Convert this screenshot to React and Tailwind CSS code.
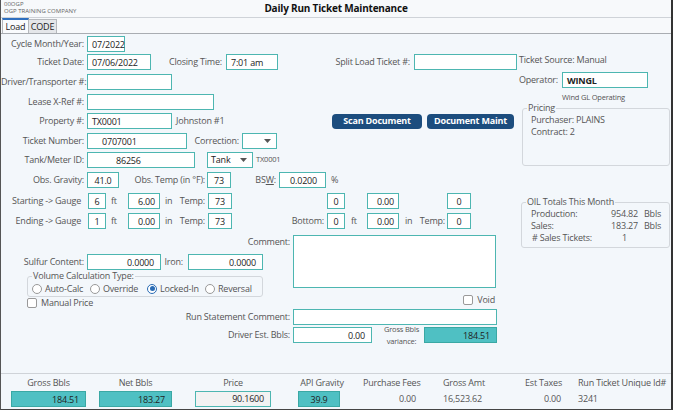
import React from "react";

const L = "shrink-0 whitespace-nowrap text-right text-[#555]";

function Inp({ className = "", align = "left", teal = false, children }) {
	return (
		<div
			className={`flex h-[16px] shrink-0 items-center border px-[4px] leading-none text-[#222] ${
				teal ? "border-[#3aa8a4] bg-[#4fc0c3]" : "border-[#4db6b1] bg-white"
			} ${align === "right" ? "justify-end" : align === "center" ? "justify-center" : "justify-start"} ${className}`}
		>
			{children}
		</div>
	);
}

function Select({ className = "", children }) {
	return (
		<div className={`flex h-[16px] shrink-0 items-center justify-between border border-[#4db6b1] bg-white pl-[3px] pr-[5px] text-[#222] ${className}`}>
			<span>{children}</span>
			<svg width="7" height="4" viewBox="0 0 7 4">
				<path d="M0 0h7L3.5 4z" fill="#555" />
			</svg>
		</div>
	);
}

function Radio({ checked, label, className = "" }) {
	return (
		<div className={`flex shrink-0 items-center gap-[3px] text-[#555] ${className}`}>
			<span
				className={`flex h-[10px] w-[10px] items-center justify-center rounded-full border bg-white ${
					checked ? "border-[#2a6cb5]" : "border-[#999]"
				}`}
			>
				{checked && <span className="h-[5px] w-[5px] rounded-full bg-[#2a6cb5]" />}
			</span>
			{label}
		</div>
	);
}

function Check({ label, className = "" }) {
	return (
		<div className={`flex items-center gap-[4px] text-[#555] ${className}`}>
			<span className="h-[10px] w-[10px] rounded-[2px] border border-[#999] bg-white" />
			{label}
		</div>
	);
}

function Gauge({ label, ft, inch, temp, bft, bin, btemp, showBottom }) {
	return (
		<div className="flex h-[16px] items-center">
			<div className={`${L} w-[87px] pr-[7px]`}>{label}</div>
			<Inp className="w-[18px]" align="center">{ft}</Inp>
			<div className="w-[22px] shrink-0 pl-[5px] text-[#555]">ft</div>
			<Inp className="w-[32px]" align="right">{inch}</Inp>
			<div className="flex w-[48px] shrink-0 justify-between pl-[5px] pr-[3px] text-[#555]">
				<span>in</span>
				<span>Temp:</span>
			</div>
			<Inp className="w-[24px]" align="center">{temp}</Inp>
			<div className={`${L} w-[95px] pr-[3px]`}>{showBottom ? "Bottom:" : ""}</div>
			<Inp className="w-[18px]" align="center">{bft}</Inp>
			<div className="w-[22px] shrink-0 pl-[6px] text-[#555]">{showBottom ? "ft" : ""}</div>
			<Inp className="w-[32px]" align="right">{bin}</Inp>
			<div className="flex w-[48px] shrink-0 justify-between pl-[6px] pr-[2px] text-[#555]">
				<span>{showBottom ? "in" : ""}</span>
				<span>{showBottom ? "Temp:" : ""}</span>
			</div>
			<Inp className="w-[24px]" align="center">{btemp}</Inp>
		</div>
	);
}

export default function App() {
	return (
		<div className="flex h-[410px] w-[673px] flex-col overflow-hidden border-b border-l border-r-2 border-b-[#444] border-l-[#555] border-r-[#333] bg-[#f3f7fb] font-['Open_Sans',sans-serif] text-[9px] tracking-[-0.2px]">
			{/* header */}
			<div className="grid h-[18px] shrink-0 grid-cols-[1fr_auto_1fr] items-center border-b border-[#cfd3d8] bg-[#f7f9fb]">
				<div className="self-start pl-[3px] pt-[1px] text-[6px] leading-[7px] tracking-normal text-[#666]">
					<div>00OGP</div>
					<div>OGP TRAINING COMPANY</div>
				</div>
				<div className="text-[10px] font-bold text-[#111]">Daily Run Ticket Maintenance</div>
				<div />
			</div>

			{/* tabs */}
			<div className="flex h-[16px] shrink-0 items-end border-b border-[#a9adb2] bg-[#f7f9fb] pl-[1px]">
				<div className="flex h-[15px] w-[27px] items-center justify-center border border-b-0 border-t-2 border-[#b5b8bc] border-t-[#2f6fbf] bg-[#f9fbfd] text-[#222]">
					Load
				</div>
				<div className="flex h-[14px] w-[28px] items-center justify-center border border-b-0 border-l-0 border-[#b5b8bc] bg-[#e4e6e9] text-[#222]">
					CODE
				</div>
			</div>

			{/* main */}
			<div className="flex h-[339px] shrink-0">
				<div className="flex w-[517px] shrink-0 flex-col pt-[2px]">
					<div className="flex h-[16px] items-center">
						<div className={`${L} w-[86px] pr-[3px]`}>Cycle Month/Year:</div>
						<Inp className="w-[38px]">07/2022</Inp>
					</div>

					<div className="mt-[2px] flex h-[16px] items-center">
						<div className={`${L} w-[86px] pr-[3px]`}>Ticket Date:</div>
						<Inp className="w-[64px]">07/06/2022</Inp>
						<div className={`${L} w-[73px] pr-[2px]`}>Closing Time:</div>
						<Inp className="ml-[2px] w-[52px]">7:01 am</Inp>
						<div className={`${L} w-[136px] pr-[4px]`}>Split Load Ticket #:</div>
						<Inp className="w-[103px]" />
					</div>

					<div className="mt-[4px] flex h-[16px] items-center">
						<div className={`${L} w-[86px] pr-[3px]`}>Driver/Transporter #:</div>
						<Inp className="w-[85px]" />
					</div>

					<div className="mt-[4px] flex h-[16px] items-center">
						<div className={`${L} w-[86px] pr-[3px]`}>Lease X-Ref #:</div>
						<Inp className="w-[127px]" />
					</div>

					<div className="mt-[3px] flex h-[16px] items-center">
						<div className={`${L} w-[86px] pr-[3px]`}>Property #:</div>
						<Inp className="w-[85px]">TX0001</Inp>
						<span className="ml-[4px] text-[#555]">Johnston #1</span>
						<div className="ml-auto mr-[4px] flex gap-[5px]">
							<button className="h-[15px] w-[90px] rounded-[4px] bg-[#1c4d7e] text-[9px] font-bold text-white">Scan Document</button>
							<button className="h-[15px] w-[87px] rounded-[4px] bg-[#1c4d7e] text-[9px] font-bold text-white">Document Maint</button>
						</div>
					</div>

					<div className="mt-[4px] flex h-[16px] items-center">
						<div className={`${L} w-[86px] pr-[3px]`}>Ticket Number:</div>
						<Inp className="w-[100px] pl-[14px]">0707001</Inp>
						<div className={`${L} w-[55px] pr-[3px]`}>Correction:</div>
						<Select className="w-[35px]" />
					</div>

					<div className="mt-[3px] flex h-[16px] items-center">
						<div className={`${L} w-[86px] pr-[3px]`}>Tank/Meter ID:</div>
						<Inp className="w-[108px] pl-[28px]">86256</Inp>
						<Select className="ml-[12px] w-[46px]">Tank</Select>
						<span className="ml-[3px] text-[7.5px] text-[#555]">TX0001</span>
					</div>

					<div className="mt-[4px] flex h-[16px] items-center">
						<div className={`${L} w-[86px] pr-[3px]`}>Obs. Gravity:</div>
						<Inp className="w-[32px]" align="center">41.0</Inp>
						<div className={`${L} w-[88px] pr-[2px]`}>Obs. Temp (in °F):</div>
						<Inp className="w-[24px]" align="center">73</Inp>
						<div className={`${L} w-[48px] pr-[3px]`}>
							BS<u>W</u>:
						</div>
						<Inp className="w-[47px] pr-[8px]" align="right">0.0200</Inp>
						<span className="ml-[5px] text-[#555]">%</span>
					</div>

					<div className="mt-[5px]">
						<Gauge label="Starting -> Gauge" ft="6" inch="6.00" temp="73" bft="0" bin="0.00" btemp="0" />
					</div>
					<div className="mt-[4px]">
						<Gauge label="Ending -> Gauge" ft="1" inch="0.00" temp="73" bft="0" bin="0.00" btemp="0" showBottom />
					</div>

					<div className="mt-[6px] flex">
						<div className="w-[248px] shrink-0">
							<div className="mt-[19px] flex h-[16px] items-center">
								<div className={`${L} w-[86px] pr-[3px]`}>Sulfur Content:</div>
								<Inp className="w-[74px] pr-[6px]" align="right">0.0000</Inp>
								<div className={`${L} w-[27px] pr-[5px]`}>Iron:</div>
								<Inp className="w-[75px] pr-[6px]" align="right">0.0000</Inp>
							</div>
							<fieldset className="ml-[26px] mt-[1px] h-[26px] w-[236px] shrink-0 rounded-[3px] border border-[#d3d7dc]">
								<legend className="ml-[4px] px-[1px] leading-[10px] text-[#555]">Volume Calculation Type:</legend>
								<div className="mt-[1px] flex h-[13px] items-center pl-[4px]">
									<Radio label="Auto-Calc" className="w-[58px]" />
									<Radio label="Override" className="w-[57px]" />
									<Radio label="Locked-In" checked className="w-[58px]" />
									<Radio label="Reversal" />
								</div>
							</fieldset>
						</div>
						<div className="flex h-[12px] w-[44px] shrink-0 items-center justify-end whitespace-nowrap pr-[3px] pt-[1px] text-[#555]">Comment:</div>
						<div className="h-[53px] w-[203px] shrink-0 border border-[#4db6b1] bg-white" />
					</div>

					<div className="flex h-[12px]">
						<Check label="Manual Price" className="ml-[26px] mt-[1px] h-[10px]" />
						<Check label="Void" className="ml-auto mr-[23px] -mt-[2px] h-[10px]" />
					</div>

					<div className="flex h-[16px] items-center">
						<div className={`${L} w-[292px] pr-[3px]`}>Run Statement Comment:</div>
						<Inp className="w-[204px]" />
					</div>

					<div className="mt-[2px] flex h-[16px] items-center">
						<div className={`${L} w-[292px] pr-[3px]`}>Driver Est. Bbls:</div>
						<Inp className="w-[79px] pr-[6px]" align="right">0.00</Inp>
						<div className="ml-[11px] w-[37px] shrink-0 text-center text-[7.5px] leading-[12px] text-[#555]">
							<div>Gross Bbls</div>
							<div>variance:</div>
						</div>
						<Inp teal className="ml-[4px] w-[73px] pr-[6px]" align="right">184.51</Inp>
					</div>
				</div>

				{/* right column */}
				<div className="flex flex-1 flex-col">
					<div className="mt-[21px] h-[10px] pl-[1px] leading-[10px] text-[#555]">Ticket Source: Manual</div>
					<div className="mt-[7px] flex h-[16px] items-center">
						<div className={`${L} w-[44px] pr-[4px]`}>Operator:</div>
						<Inp className="w-[86px] font-bold text-[#111]">WINGL</Inp>
					</div>
					<div className="mt-[5px] h-[9px] pl-[44px] text-[7.5px] leading-[9px] text-[#555]">Wind GL Operating</div>
					<fieldset className="ml-[4px] mt-[1px] h-[63px] w-[148px] shrink-0 rounded-[3px] border border-[#d3d7dc]">
						<legend className="ml-[4px] px-[1px] leading-[10px] text-[#555]">Pricing</legend>
						<div className="pl-[8px] pt-[1px] leading-[12px] text-[#555]">
							<div>Purchaser: PLAINS</div>
							<div>Contract: 2</div>
						</div>
					</fieldset>
					<fieldset className="ml-[3px] mt-[31px] h-[51px] w-[149px] shrink-0 rounded-[3px] border border-[#d3d7dc]">
						<legend className="ml-[4px] px-[1px] leading-[10px] text-[#555]">OIL Totals This Month</legend>
						<div className="pl-[9px] pt-[1px] leading-[12px] text-[#555]">
							<div className="flex">
								<span className="w-[79px]">Production:</span>
								<span className="w-[28px] text-right">954.82</span>
								<span className="ml-[6px]">Bbls</span>
							</div>
							<div className="flex">
								<span className="w-[79px]">Sales:</span>
								<span className="w-[28px] text-right">183.27</span>
								<span className="ml-[6px]">Bbls</span>
							</div>
							<div className="flex">
								<span className="w-[79px] pl-[1px]"># Sales Tickets:</span>
								<span className="w-[28px] pr-[11px] text-right">1</span>
							</div>
						</div>
					</fieldset>
				</div>
			</div>

			{/* bottom totals */}
			<div className="flex h-[36px] shrink-0 border-t border-[#cfd3d8] pl-[10px] text-[#555]">
				<div className="flex w-[75px] shrink-0 flex-col items-center">
					<div className="mt-[4px] h-[10px] whitespace-nowrap leading-[10px]">Gross Bbls</div>
					<Inp teal className="mt-[3px] w-[75px] pr-[6px]" align="right">184.51</Inp>
				</div>
				<div className="ml-[13px] flex w-[73px] shrink-0 flex-col items-center">
					<div className="mt-[4px] h-[10px] whitespace-nowrap leading-[10px]">Net Bbls</div>
					<Inp teal className="mt-[3px] w-[73px] pr-[6px]" align="right">183.27</Inp>
				</div>
				<div className="ml-[23px] flex w-[76px] shrink-0 flex-col items-center">
					<div className="mt-[4px] h-[10px] whitespace-nowrap leading-[10px]">Price</div>
					<div className="mt-[3px] flex h-[16px] w-[76px] items-center justify-end border border-[#4db6b1] bg-[#f2f2f2] pr-[6px] text-[#222]">90.1600</div>
				</div>
				<div className="ml-[27px] flex w-[42px] shrink-0 flex-col items-center">
					<div className="mt-[4px] h-[10px] whitespace-nowrap pl-[6px] leading-[10px]">API Gravity</div>
					<Inp teal className="mt-[3px] w-[42px]" align="center">39.9</Inp>
				</div>
				<div className="ml-[23px] flex w-[55px] shrink-0 flex-col">
					<div className="mt-[4px] h-[10px] whitespace-nowrap text-center leading-[10px]">Purchase Fees</div>
					<div className="mt-[3px] flex h-[16px] items-center justify-end pr-[2px]">0.00</div>
				</div>
				<div className="ml-[25px] flex w-[60px] shrink-0 flex-col">
					<div className="mt-[4px] h-[10px] whitespace-nowrap leading-[10px]">Gross Amt</div>
					<div className="mt-[3px] flex h-[16px] items-center">16,523.62</div>
				</div>
				<div className="ml-[22px] flex w-[36px] shrink-0 flex-col">
					<div className="mt-[4px] h-[10px] whitespace-nowrap leading-[10px]">Est Taxes</div>
					<div className="mt-[3px] flex h-[16px] items-center justify-end">0.00</div>
				</div>
				<div className="ml-[17px] flex w-[92px] shrink-0 flex-col">
					<div className="mt-[4px] h-[10px] whitespace-nowrap leading-[10px]">Run Ticket Unique Id#</div>
					<div className="mt-[3px] flex h-[16px] items-center">3241</div>
				</div>
			</div>
		</div>
	);
}
